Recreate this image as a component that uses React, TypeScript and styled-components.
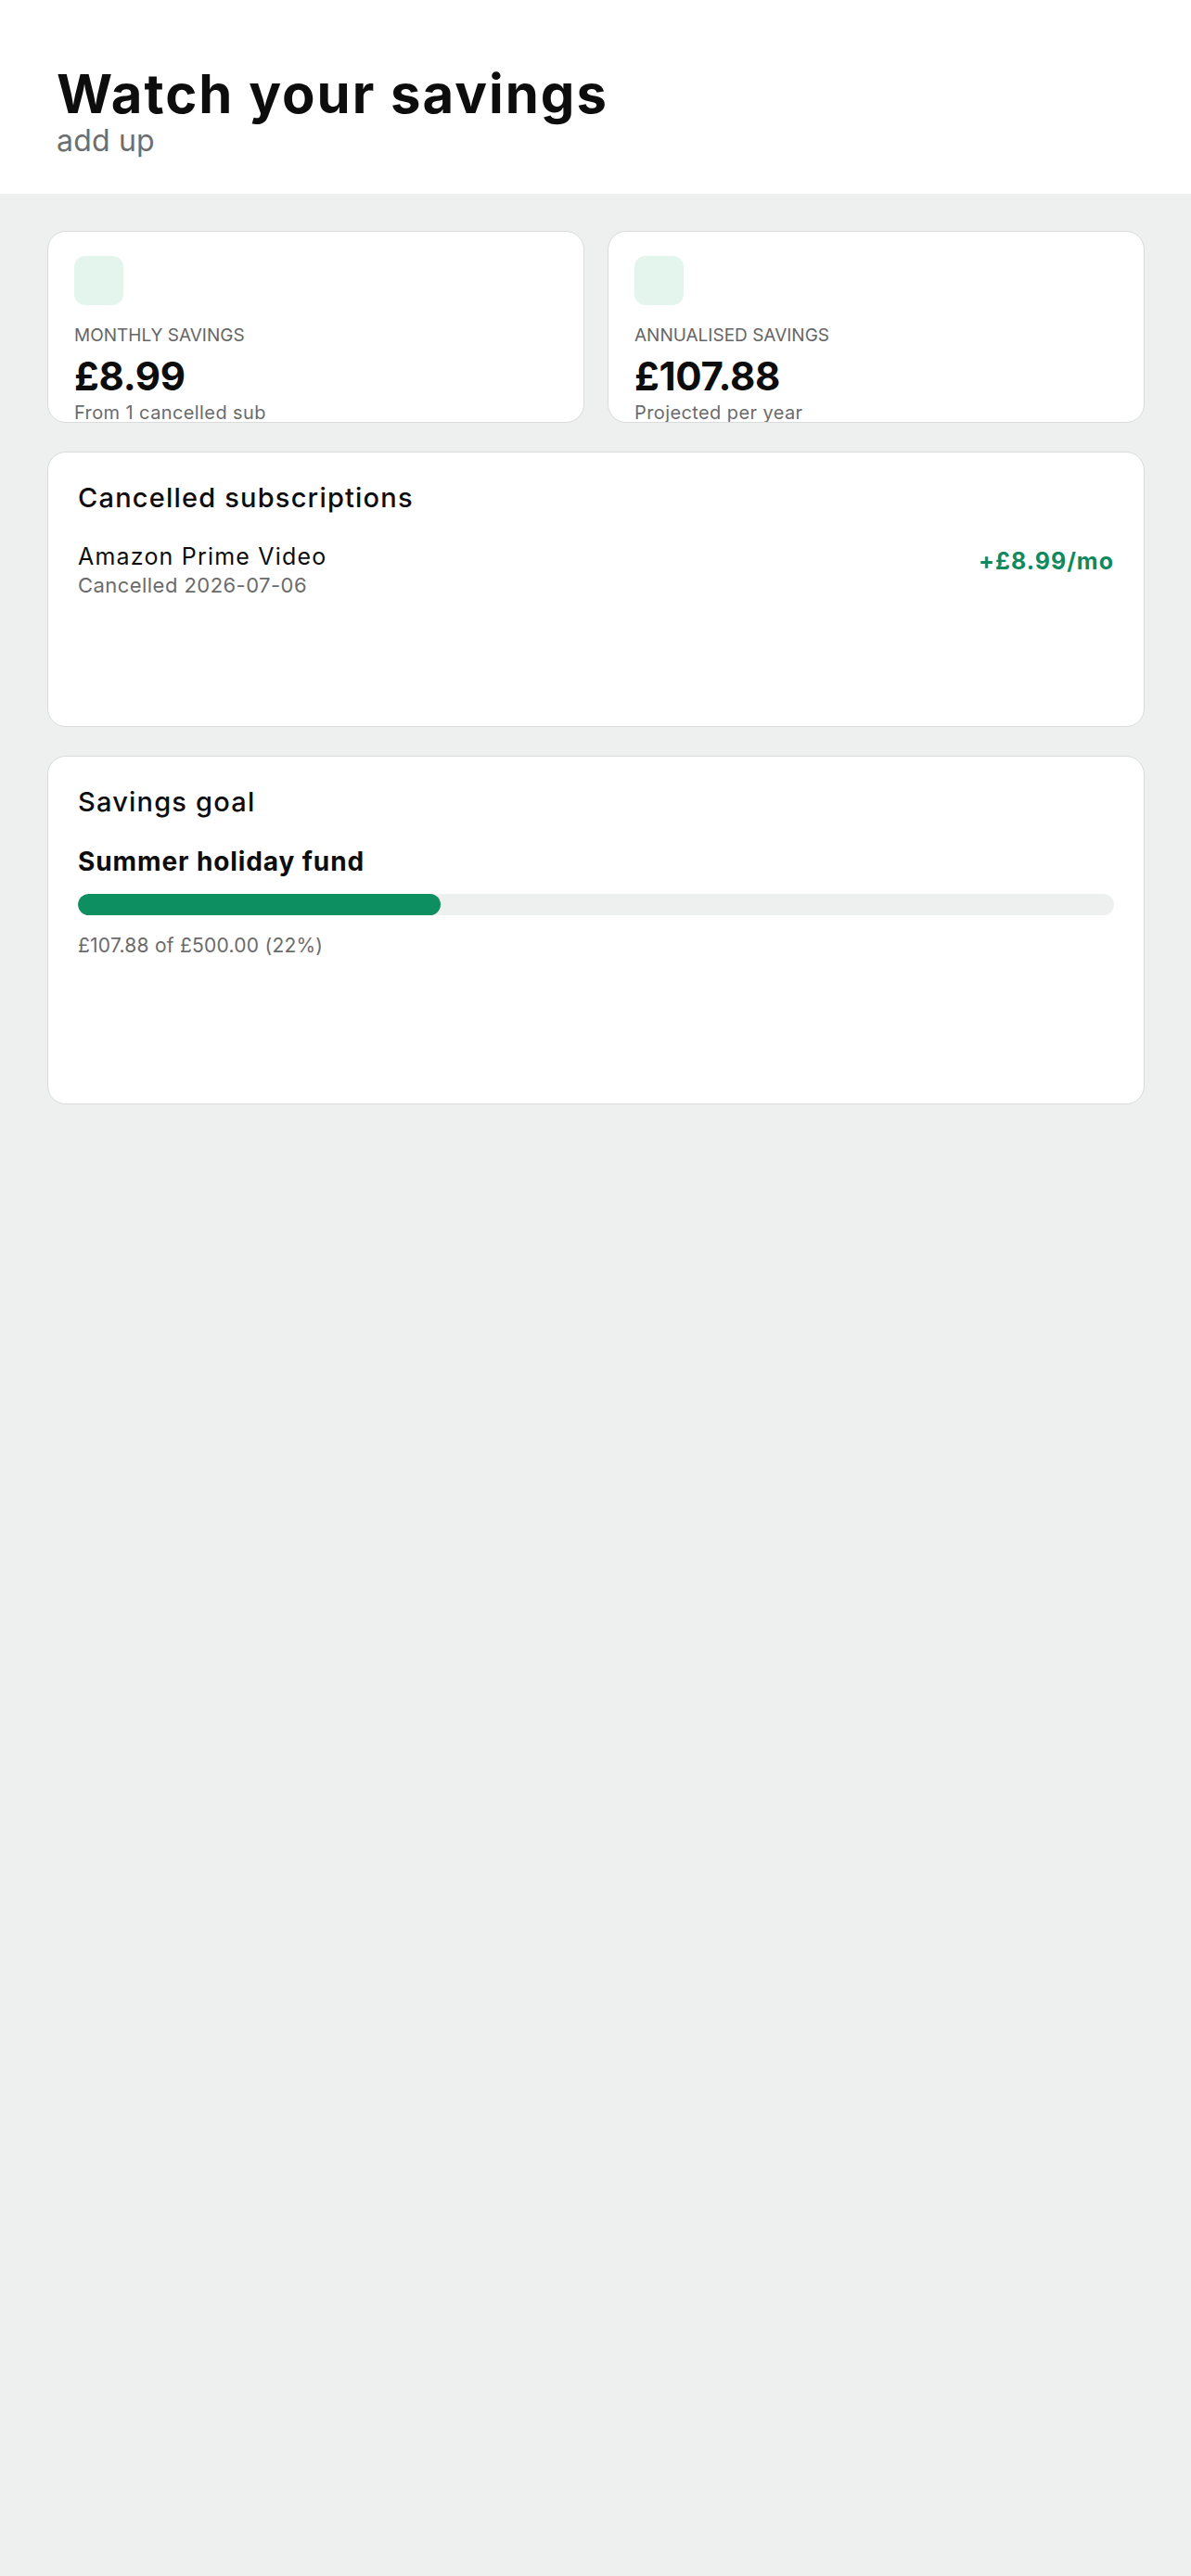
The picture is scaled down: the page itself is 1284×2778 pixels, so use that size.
import styled, { createGlobalStyle } from "styled-components";

const GlobalStyle = createGlobalStyle`
  html, body {
    margin: 0;
    padding: 0;
    background: #eef0ef;
    font-family: Inter, "Noto Sans", sans-serif;
    color: #0d0d0d;
  }
  * { box-sizing: border-box; }
`;

const summary = [
  { label: "Monthly savings", value: "£8.99", note: "From 1 cancelled sub" },
  { label: "Annualised savings", value: "£107.88", note: "Projected per year" },
];

const goal = { name: "Summer holiday fund", saved: 107.88, target: 500, barPct: 35 };

export default function App() {
  return (
    <>
      <GlobalStyle />
      <Page>
        <Header>
          <Title>Watch your savings</Title>
          <Subtitle>add up</Subtitle>
        </Header>

        <Main>
          <SummaryGrid>
            {summary.map((s) => (
              <SummaryCard key={s.label}>
                <IconBox />
                <StatLabel>{s.label}</StatLabel>
                <StatValue>{s.value}</StatValue>
                <StatNote>{s.note}</StatNote>
              </SummaryCard>
            ))}
          </SummaryGrid>

          <Panel $height={297}>
            <PanelTitle>Cancelled subscriptions</PanelTitle>
            <SubRow>
              <div>
                <SubName>Amazon Prime Video</SubName>
                <SubMeta>Cancelled 2026-07-06</SubMeta>
              </div>
              <SubAmount>+£8.99/mo</SubAmount>
            </SubRow>
          </Panel>

          <Panel $height={376}>
            <PanelTitle>Savings goal</PanelTitle>
            <GoalName>{goal.name}</GoalName>
            <Track>
              <Fill style={{ width: `${goal.barPct}%` }} />
            </Track>
            <GoalMeta>
              £{goal.saved.toFixed(2)} of £{goal.target.toFixed(2)} (
              {Math.round((goal.saved / goal.target) * 100)}%)
            </GoalMeta>
          </Panel>
        </Main>
      </Page>
    </>
  );
}

const Page = styled.div`
  min-height: 2778px;
  background: #eef0ef;
`;

const Header = styled.header`
  background: #ffffff;
  height: 209px;
  padding: 69px 60px 0 61px;
`;

const Title = styled.h1`
  margin: 0;
  font-size: 58px;
  line-height: 64px;
  font-weight: 700;
  letter-spacing: 2px;
  color: #0d0d0d;
`;

const Subtitle = styled.p`
  margin: 0;
  font-size: 32px;
  line-height: 38px;
  font-weight: 400;
  letter-spacing: 0.2px;
  color: #6e6e6e;
`;

const Main = styled.main`
  padding: 40px 50px 40px 51px;
  display: flex;
  flex-direction: column;
  gap: 31px;
`;

const SummaryGrid = styled.div`
  display: grid;
  grid-template-columns: 1fr 1fr;
  gap: 25px;
`;

const SummaryCard = styled.div`
  height: 207px;
  overflow: hidden;
  background: #ffffff;
  border: 1px solid #d9dcdb;
  border-radius: 20px;
  padding: 26px 28px 0;
`;

const IconBox = styled.div`
  width: 53px;
  height: 53px;
  border-radius: 12px;
  background: #e3f5ec;
`;

const StatLabel = styled.div`
  margin-top: 21px;
  font-size: 19px;
  line-height: 24px;
  text-transform: uppercase;
  color: #666666;
`;

const StatValue = styled.div`
  margin-top: 8px;
  font-size: 42px;
  line-height: 48px;
  font-weight: 700;
  letter-spacing: -0.3px;
  color: #0d0d0d;
`;

const StatNote = styled.div`
  margin-top: 3px;
  font-size: 20px;
  line-height: 24px;
  letter-spacing: 0.4px;
  color: #6b6b6b;
`;

const Panel = styled.section<{ $height: number }>`
  height: ${(p) => p.$height}px;
  background: #ffffff;
  border: 1px solid #d9dcdb;
  border-radius: 20px;
  padding: 32px 32px 0;
`;

const PanelTitle = styled.h2`
  margin: 0;
  font-size: 29px;
  line-height: 34px;
  font-weight: 500;
  letter-spacing: 1.2px;
  color: #0d0d0d;
`;

const SubRow = styled.div`
  margin-top: 31px;
  display: flex;
  justify-content: space-between;
  align-items: flex-start;
`;

const SubName = styled.div`
  font-size: 25px;
  line-height: 30px;
  letter-spacing: 1.2px;
  color: #0d0d0d;
`;

const SubMeta = styled.div`
  margin-top: 3px;
  font-size: 22px;
  line-height: 26px;
  letter-spacing: 0.45px;
  color: #6b6b6b;
`;

const SubAmount = styled.div`
  margin-top: 5px;
  font-size: 25px;
  line-height: 30px;
  font-weight: 700;
  letter-spacing: 1px;
  color: #0f8a5f;
`;

const GoalName = styled.div`
  margin-top: 30px;
  font-size: 28px;
  line-height: 34px;
  font-weight: 700;
  letter-spacing: 0.9px;
  color: #0d0d0d;
`;

const Track = styled.div`
  margin-top: 18px;
  height: 23px;
  border-radius: 12px;
  background: #eef0ef;
  overflow: hidden;
`;

const Fill = styled.div`
  height: 100%;
  border-radius: 12px;
  background: #0e8f61;
`;

const GoalMeta = styled.div`
  margin-top: 20px;
  font-size: 21px;
  line-height: 26px;
  letter-spacing: 0.25px;
  color: #6b6b6b;
`;
